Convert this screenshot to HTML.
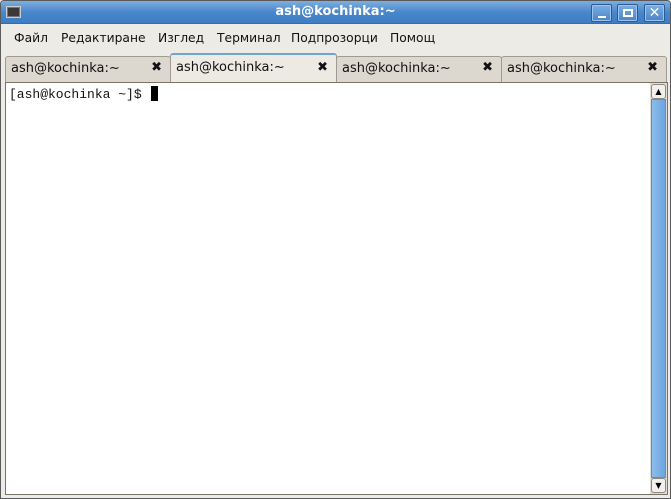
<!DOCTYPE html>
<html><head><meta charset="utf-8"><style>
*{margin:0;padding:0;box-sizing:border-box}
body{width:671px;height:499px;overflow:hidden;background:#edeae3;font-family:"DejaVu Sans","Liberation Sans",sans-serif;position:relative}
.win{position:absolute;left:0;top:0;width:671px;height:499px;border:1px solid #5a5a5a;border-radius:4px 4px 0 0;background:#edebe6}
.title{position:absolute;left:0;top:0;width:669px;height:23px;background:linear-gradient(#7eaede,#4a88cb 50%,#3f7dc4);border-bottom:1px solid #3a6aa8;border-radius:3px 3px 0 0}
.title .t{position:absolute;left:0;right:0;top:3px;text-align:center;color:#fff;font-weight:bold;font-size:13px}
.ico{position:absolute;left:5px;top:5px;width:15px;height:12px;background:#3a3a3a;border:1px solid #ccc;box-shadow:inset 0 0 0 1px #777}
.btn{position:absolute;top:3px;width:21px;height:18px;border:1px solid #2d5a94;border-radius:2px;background:linear-gradient(#7aaee4,#4a84c8);box-shadow:inset 0 0 0 1px #9cc4ee}
.menu{position:absolute;left:0;top:28px;font-size:12.3px;color:#111}
.menu span{position:absolute;white-space:nowrap;top:2px}
.tab{position:absolute;top:55px;height:26px;background:#dcd7cf;border:1px solid #a09a90;border-bottom:none;border-radius:3px 3px 0 0;font-size:13px;color:#111}
.tab.a{top:52px;height:30px;background:#edeae4;border-top:2px solid #6ea3d8}
.tab span{position:absolute;left:5px;top:4px;white-space:nowrap}
.tab.a span{top:5px}
.tab b{position:absolute;right:8px;top:3px;font-size:13px}
.tab.a b{top:5px}
.term{position:absolute;left:4px;top:81px;width:663px;height:413px;background:#fff;border:1px solid #7a7368}
.prompt{position:absolute;left:3px;top:3px;font-family:"Liberation Mono","DejaVu Sans Mono",monospace;font-size:13px;color:#111}
.cur{display:inline-block;width:7px;height:15px;background:#000;vertical-align:-3px;margin-left:9px}
.sb{position:absolute;left:644px;top:0;width:17px;height:411px;background:#e0ddd6}
.sbb{position:absolute;left:1px;width:15px;height:15px;background:#f2f0ec;border:1px solid #8e887e;border-radius:3px;font-size:8px;text-align:center;line-height:13px}
.thumb{position:absolute;left:1px;top:16px;width:15px;height:379px;background:linear-gradient(90deg,#8dbcec,#6ca5df);border:1px solid #5b8fcc}
</style></head><body>
<div class="win">
<div class="title"><div class="ico"></div><div class="t">ash@kochinka:~</div>
<div class="btn" style="left:590px"><div style="position:absolute;left:6px;top:11px;width:8px;height:2px;background:#fff"></div></div>
<div class="btn" style="left:616px"><div style="position:absolute;left:5px;top:4px;width:10px;height:8px;border:2px solid #fff;border-top-width:2px"></div></div>
<div class="btn" style="left:643px;color:#fff;font-weight:bold;font-size:14px;text-align:center;line-height:16px">✕</div>
</div>
<div class="menu">
<span style="left:13px">Файл</span><span style="left:60px">Редактиране</span><span style="left:157px">Изглед</span><span style="left:216px">Терминал</span><span style="left:290px">Подпрозорци</span><span style="left:389px">Помощ</span>
</div>
<div class="tab" style="left:4px;width:166px"><span>ash@kochinka:~</span><b>✖</b></div>
<div class="tab a" style="left:169px;width:167px"><span>ash@kochinka:~</span><b>✖</b></div>
<div class="tab" style="left:335px;width:166px"><span>ash@kochinka:~</span><b>✖</b></div>
<div class="tab" style="left:500px;width:166px"><span>ash@kochinka:~</span><b>✖</b></div>
<div class="term">
<div class="prompt">[ash@kochinka ~]$<span class="cur"></span></div>
<div class="sb"><div class="sbb" style="top:1px">▲</div><div class="thumb"></div><div class="sbb" style="top:395px">▼</div></div>
</div>
</div>
</body></html>
